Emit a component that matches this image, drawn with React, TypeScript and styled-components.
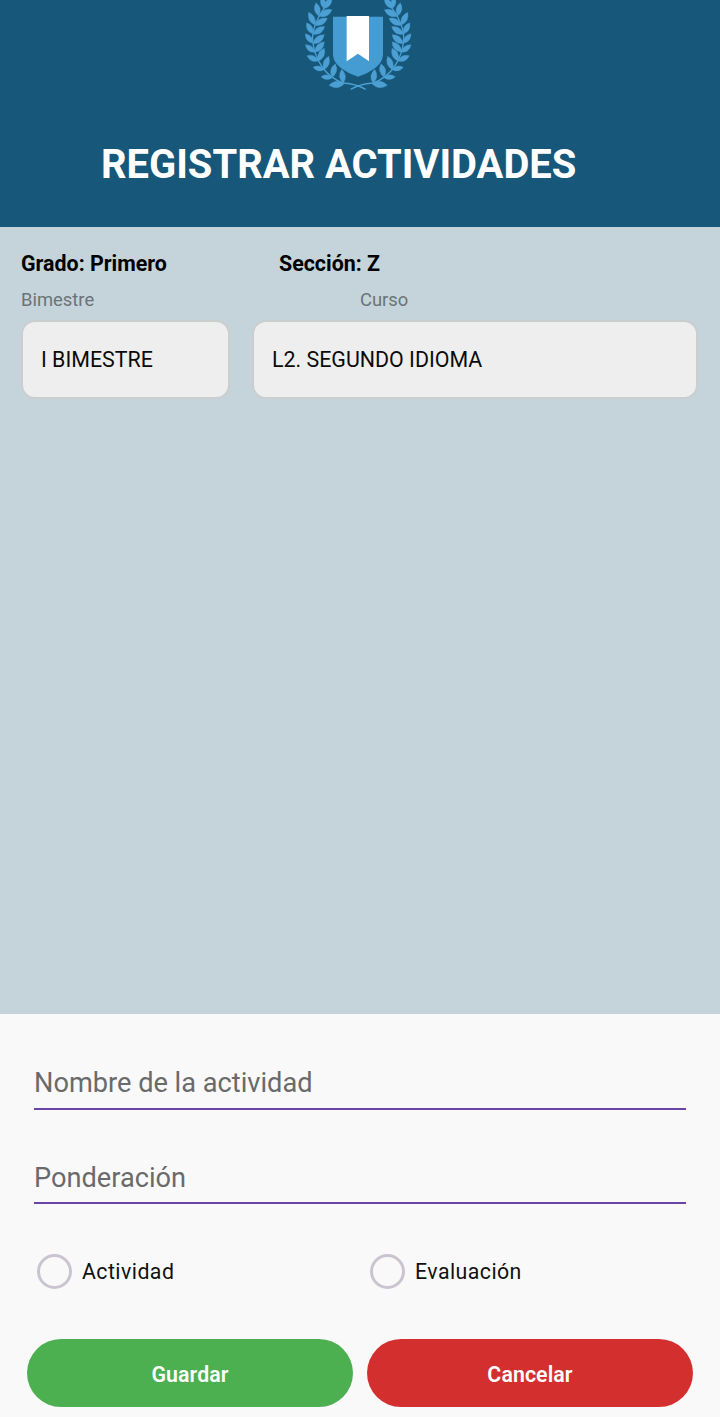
import React from 'react';
import styled, { createGlobalStyle } from 'styled-components';

const GlobalStyle = createGlobalStyle`
  * { box-sizing: border-box; }
  body { margin: 0; background: #f9f9f9; font-family: Roboto, sans-serif; }
`;

const Screen = styled.div`
  width: 720px;
  height: 1417px;
  display: flex;
  flex-direction: column;
  overflow: hidden;
  background: #f9f9f9;
`;

const Header = styled.header`
  height: 227px;
  flex: none;
  background: #175779;
  display: flex;
  flex-direction: column;
`;

const Logo = styled.svg`
  display: block;
  width: 126px;
  height: 100px;
  margin-left: 295px;
`;

const Title = styled.h1`
  margin: 41px 0 0 101px;
  font-size: 39.9px;
  line-height: 48px;
  font-weight: 700;
  color: #fff;
  white-space: nowrap;
`;

const Content = styled.main`
  height: 787px;
  flex: none;
  padding: 21px 22px 0 21px;
  background: #c5d3da;
`;

const Columns = styled.div<{ $first: number; $height: number }>`
  display: grid;
  grid-template-columns: ${(p) => p.$first}px 1fr;
  height: ${(p) => p.$height}px;
  align-items: center;
`;

const Info = styled.span`
  font-size: 21.4px;
  font-weight: 700;
  color: #000;
`;

const Caption = styled.span`
  padding-top: 1px;
  font-size: 18.4px;
  color: #6b7378;
`;

const Selects = styled.div`
  display: grid;
  grid-template-columns: 209px 446px;
  gap: 22px;
`;

const Select = styled.div`
  height: 79px;
  padding: 0 18px;
  display: flex;
  align-items: center;
  border: 2px solid #cbcecf;
  border-radius: 14px;
  background: #eee;
  color: #0b0b0b;
  font-size: 21.4px;
`;

const Form = styled.form`
  flex: 1;
  padding: 46px 27px 0;
`;

const Field = styled.div`
  height: 49.5px;
  margin: 0 7px 45px;
  border-bottom: 2px solid #6a45a4;
  font-size: 27.2px;
  line-height: 46px;
  color: #6a6a6a;
`;

const Options = styled.div`
  display: grid;
  grid-template-columns: 333px 1fr;
  height: 34px;
  margin: 50px 0 51px 10px;
`;

const Option = styled.label`
  display: flex;
  align-items: center;
  gap: 10px;
  font-size: 21.3px;
  letter-spacing: 0.45px;
  color: #111;
`;

const Ring = styled.span`
  width: 35px;
  height: 35px;
  border: 3.5px solid #cac4d0;
  border-radius: 50%;
`;

const Actions = styled.div`
  display: grid;
  grid-template-columns: 326px 326px;
  gap: 14px;
`;

const Button = styled.button<{ $color: string }>`
  height: 68px;
  padding: 2px 0 0;
  border: 0;
  border-radius: 34px;
  background: ${(p) => p.$color};
  color: #fff;
  font: 600 21.3px Roboto, sans-serif;
  letter-spacing: 0.1px;
`;

type Leaf = [number, number, number, number];

// Each leaf runs from its base on the stem to its tip.
const leaves: Leaf[] = [
  [85, 24, 82, -10], [86, 26, 111, -6],
  [71, 48, 63, 8], [71, 49, 111, 29],
  [60, 75, 41, 37], [60, 76, 97, 55],
  [54, 102, 35, 68], [54, 103, 89, 80],
  [54, 130, 31, 101], [54, 131, 88, 104],
  [60, 157, 31, 134], [59, 157, 88, 125],
  [70, 183, 36, 167], [69, 184, 88, 145],
  [88, 209, 54, 202], [87, 209, 101, 169],
  [112, 233, 78, 230], [111, 232, 121, 191],
  [148, 251, 102, 256], [145, 250, 140, 208],
];

const leafPath = ([x1, y1, x2, y2]: Leaf) => {
  const dx = x2 - x1;
  const dy = y2 - y1;
  const k = 0.42;
  const mx = x1 + dx * 0.5;
  const my = y1 + dy * 0.5;
  return `M${x1} ${y1}Q${mx - dy * k} ${my + dx * k} ${x2} ${y2}Q${mx + dy * k} ${my - dx * k} ${x1} ${y1}Z`;
};

const Branch = () => (
  <g>
    <path
      d="M103 4C78 35 50 75 53 120C58 180 92 231 145 249C170 251 192 256 212 268"
      fill="none"
      stroke="#4b9fd3"
      strokeWidth="4"
    />
    {leaves.map((leaf, i) => (
      <path key={i} d={leafPath(leaf)} fill="#4b9fd3" stroke="#4b9fd3" strokeWidth="1" />
    ))}
  </g>
);

const Emblem = () => (
  <Logo viewBox="0 0 378 300" aria-hidden="true">
    <Branch />
    <g transform="translate(379 0) scale(-1 1)">
      <Branch />
    </g>
    <path d="M114 50H264V161C264 197 226 216 189 230C152 216 114 197 114 161Z" fill="#459cd2" />
    <path d="M155 48H222V184L189 161L155 184Z" fill="#fff" />
  </Logo>
);

export default function App() {
  return (
    <>
      <GlobalStyle />
      <Screen>
        <Header>
          <Emblem />
          <Title>REGISTRAR ACTIVIDADES</Title>
        </Header>
        <Content>
          <Columns $first={258} $height={30}>
            <Info>Grado: Primero</Info>
            <Info>Sección: Z</Info>
          </Columns>
          <Columns $first={339} $height={42}>
            <Caption>Bimestre</Caption>
            <Caption>Curso</Caption>
          </Columns>
          <Selects>
            <Select>I BIMESTRE</Select>
            <Select>L2. SEGUNDO IDIOMA</Select>
          </Selects>
        </Content>
        <Form>
          <Field>Nombre de la actividad</Field>
          <Field>Ponderación</Field>
          <Options>
            <Option><Ring />Actividad</Option>
            <Option><Ring />Evaluación</Option>
          </Options>
          <Actions>
            <Button type="button" $color="#4caf50">Guardar</Button>
            <Button type="button" $color="#d32f2f">Cancelar</Button>
          </Actions>
        </Form>
      </Screen>
    </>
  );
}
